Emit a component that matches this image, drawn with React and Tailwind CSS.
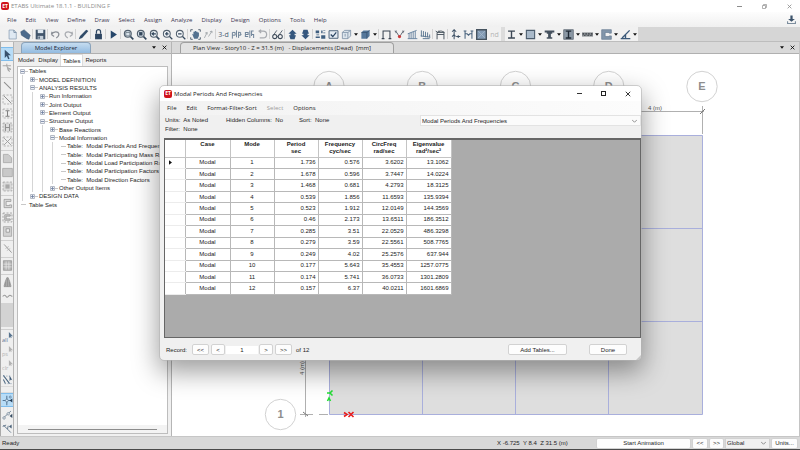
import React, { useState } from "react";

const ICONS = {
  file: <><path d="M3 1.5h7l3.5 3.5v9.5h-10.500z" fill="#dfe9f3" stroke="#8296ad" /><path d="M10 1.500v3.500h3.500" fill="none" stroke="#5c7590" /></>,
  open: <path d="M1 4l5-3 9 8-2 6-3-1-8-5z" fill="#4d6b8c" stroke="#344c66" strokeWidth=".6" />,
  save: <><path d="M1 1h14v14H1z" fill="#42566c" /><path d="M4 1h8v5H4z" fill="#dfe8f0" /><path d="M4 10h8v5H4z" fill="#c3ced9" /><path d="M5 11h2v3H5z" fill="#42566c" /></>,
  undo: <path d="M2 8l4 3M2 8l1-4M2 8c3-5 10-5 11-1 0 3-2 5-4 6" fill="none" stroke="#8a8f96" strokeWidth="1.7" />,
  redo: <path d="M14 8l-4 3M14 8l-1-4M14 8C11 3 4 3 3 7c0 3 2 5 4 6" fill="none" stroke="#a8abb0" strokeWidth="1.7" />,
  pencil: <path d="M1 15l2-5 9-9 3 2-9 10z" fill="#314c69" />,
  lock: <><path d="M3 7h10v8H3z" fill="#2f4763" /><path d="M5 7V4a3 3 0 016 0v3" fill="none" stroke="#2f4763" strokeWidth="1.8" /></>,
  play: <path d="M4 2l9 6-9 6z" fill="#27476b" />,
  zoomWindow: <><circle cx="7" cy="7" r="5" fill="#d8e2ea" stroke="#53616f" strokeWidth="1.7" /><path d="M4 5h6v5H4z" fill="none" stroke="#53616f" /><path d="M11 11l4 4" stroke="#33475c" strokeWidth="2.4" /></>,
  zoomFull: <><circle cx="7" cy="7" r="5" fill="#d8e2ea" stroke="#53616f" strokeWidth="1.7" /><path d="M4.500 4.500h5v5h-5z" fill="#33475c" /><path d="M11 11l4 4" stroke="#33475c" strokeWidth="2.400" /></>,
  zoomPrev: <><circle cx="7" cy="7" r="5" fill="#e6edf2" stroke="#53616f" strokeWidth="1.7" /><path d="M3 7l4-3v2h3v2H7v2z" fill="#33475c" /><path d="M11 11l4 4" stroke="#33475c" strokeWidth="2.4" /></>,
  zoomIn: <><circle cx="7" cy="7" r="5" fill="#f2f5f8" stroke="#53616f" strokeWidth="1.5" /><path d="M4.500 7h5M7 4.500v5M11 11l4 4" stroke="#33475c" strokeWidth="1.800" /></>,
  zoomOut: <><circle cx="7" cy="7" r="5" fill="#f2f5f8" stroke="#53616f" strokeWidth="1.5" /><path d="M4.500 7h5M11 11l4 4" stroke="#33475c" strokeWidth="1.800" /></>,
  pan: <><path d="M1 4V1h3M12 1h3v3M15 12v3h-3M4 15H1v-3" fill="none" stroke="#4a5a6b" strokeWidth="1.300" /><path d="M3 7l2 1V4h2V3h2v1h2v1h2v5l-2 4H6z" fill="#53718f" /></>,
  arrows: <path d="M2 13l4-8M3 6l3-1v3M8 11l5-8M10 4l3-1v3" fill="none" stroke="#a3a8ad" strokeWidth="1.3" />,
  plan: <path d="M2 14V5h4v4H2M8 2v10M11 4v9M11 9h3V5h-3M14 9l1-1" fill="none" stroke="#6d8298" strokeWidth="1.4" />,
  elev: <path d="M2 8h4V5H2v6h4M8.500 2v11M14 3h-3v5h3v5M11 8v2" fill="none" stroke="#71869c" strokeWidth="1.500" />,
  rotate: <path d="M4 3h5a5 5 0 010 10H4M6 1L3 3l3 3" fill="none" stroke="#a8abb0" strokeWidth="1.8" />,
  glasses: <><circle cx="4" cy="11" r="3" fill="none" stroke="#3f4c5b" strokeWidth="1.5" /><circle cx="12" cy="11" r="3" fill="none" stroke="#3f4c5b" strokeWidth="1.5" /><path d="M2 9l5-7M10 9l5-7M7 11h2" stroke="#3f4c5b" strokeWidth="1.200" /></>,
  up: <path d="M8 1l6 6h-3v2h2l-2 6H5L3 9h2V7H2z" fill="#35577e" />,
  down: <path d="M8 15l6-6h-3V7h2l-2-6H5L3 7h2v2H2z" fill="#35577e" />,
  objects: <path d="M1 2h5v4H1zM9 2h2v4H9zM12 2h3v1h-3zM12 5h3v1h-3zM2 8h4v1H2zM1 11h6v2H1zM9 9h6v5H9z" fill="#3f5f80" />,
  check: <><path d="M1.500 2.500h13v11h-13z" fill="#e4ebf2" stroke="#4d637b" strokeWidth="1.400" /><path d="M4 8l3 3 5-6" fill="none" stroke="#294462" strokeWidth="1.800" /></>,
  box: <path d="M2 5l3-3h9v8l-4 4H2zM2 5h8v9M10 5l4-3M6 7v4" fill="#dce5ed" stroke="#7d91a6" strokeWidth="1.200" />,
  solid: <><path d="M2 5l3-3h9v8l-4 4H2z" fill="#55789c" /><path d="M2 5h8v9M10 5l4-3" fill="none" stroke="#314b67" /></>,
  frame: <path d="M3 14V3h10v11M1 14h4M11 14h4" fill="none" stroke="#3b4654" strokeWidth="1.500" />,
  joint: <><path d="M1 3l3 2 3 5M15 3l-3 2-3 5M3 2v4M13 2v4" fill="none" stroke="#56616d" strokeWidth="1.3" /><circle cx="8" cy="11" r="2.300" fill="#cc3938" /></>,
  load: <path d="M1 14h14M3 14V6M6 14V5M9 14V4M12 14V3M1 7l13-5" fill="none" stroke="#63809d" strokeWidth="1.300" />,
  diagram: <path d="M1 10l14 2M2 2v9M5 3v8M8 4v8M11 5v7M14 8v4M4 14h10" fill="none" stroke="#54718e" strokeWidth="1.300" />,
  deform: <path d="M3 15V5h10v10M1 3l3 2 2-3M6 4c2-2 4-1 8 1M3 8h10" fill="none" stroke="#3f4b57" strokeWidth="1.300" />,
  node: <path d="M6 1v14M3 4l3-3 3 3M3 11l3-3 2 3M9 11h6M12 9v4" fill="none" stroke="#3f5266" strokeWidth="1.500" />,
  span: <path d="M3 14V3M13 14V3M1 3h4M11 3h4M3 7h3l2 2 2-2h3" fill="none" stroke="#48627d" strokeWidth="1.500" />,
  shell: <><path d="M1 1h14v14H1z" fill="#839bb5" stroke="#46535f" strokeWidth="2" /><path d="M3 3l10 10M13 3L3 13" stroke="#a9bdd1" /></>,
  ibeam: <path d="M3 2h10v2H9v8h4v2H3v-2h4V4H3z" fill="#3b4754" />,
  square: <path d="M2 2h12v12H2z" fill="#a9b9c9" stroke="#4c5d6e" strokeWidth="1.600" />,
  tee: <path d="M1 2h14v3h-3v2h-2v5h2v2H4v-2h2V7H4V5H1z" fill="#45515e" />,
  iboxed: <><path d="M1 1h14v14H1z" fill="#8b98a5" stroke="#4e5a66" /><path d="M4 2h8v2H9v8h3v2H4v-2h3V4H4z" fill="#202a35" /></>,
  deck: <><path d="M0 5h16v6H0z" fill="#84898e" /><path d="M1 6h2v2H1zM5 6h2v2H5zM9 6h2v2H9zM13 6h2v2h-2zM3 9h2v1H3zM8 9h2v1H8zM12 9h2v1h-2z" fill="#34393e" /></>,
  channel: <path d="M1 1h14v5h-3V5H6v6h6v-1h3v5H1z" fill="#8296ab" stroke="#647990" />,
  angle: <path d="M1 14h14M3 13L14 2M8 13V8" fill="none" stroke="#3b597a" strokeWidth="2" />,
  pointer: <path d="M4 1v12l3-3 2 5 2-1-2-5h4z" fill="#38516c" />,
  reshape: <path d="M1 4h12M7 1v3l2 6 2 3M9 7l4 2-4 2z" fill="none" stroke="#a3a3a3" strokeWidth="1.400" />,
  line: <path d="M3 3l10 10" stroke="#8f8f8f" strokeWidth="1.500" />,
  dashLine: <><path d="M1.500 1.500h13v13h-13z" fill="none" stroke="#9a9a9a" strokeDasharray="3 2" /><path d="M3 3l10 10" stroke="#8a8a8a" strokeWidth="1.400" /></>,
  dashBeam: <><path d="M1.500 1.500h13v13h-13z" fill="none" stroke="#9a9a9a" strokeDasharray="3 2" /><path d="M5 4h6M8 4v8M5 12h6" stroke="#808080" strokeWidth="1.500" /></>,
  dashCols: <><path d="M1.500 1.500h13v13h-13z" fill="#dedede" stroke="#9a9a9a" strokeDasharray="3 2" /><path d="M5 3v10M11 3v10M5 8h6" stroke="#909090" strokeWidth="1.500" /></>,
  brace: <><path d="M1.500 1.500h13v13h-13z" fill="none" stroke="#9a9a9a" strokeDasharray="3 2" /><path d="M3 3l10 10M13 3L3 13" stroke="#9a9a9a" strokeWidth="1.300" /></>,
  poly: <path d="M2 2h7l5 5v7H2z" fill="#cbcbcb" stroke="#a0a0a0" />,
  rect: <path d="M1 2h14v12H1z" fill="#c8c8c8" stroke="#9c9c9c" />,
  quick: <><path d="M1.500 1.500h13v13h-13z" fill="#d9d9d9" stroke="#9a9a9a" strokeDasharray="3 2" /><path d="M5 5h6v6H5z" fill="#a8a8a8" /></>,
  wall: <path d="M13 2H3v12h11v-4h-3v1H6V5h7z" fill="#d9d9d9" stroke="#8f8f8f" />,
  quickWall: <><path d="M1.500 1.500h13v13h-13z" fill="none" stroke="#888" strokeDasharray="3 2" /><path d="M12 4H4v8h8v-2H6V6h6z" fill="#d5d5d5" stroke="#888" /></>,
  opening: <><path d="M2 1h12v14H2z" fill="#d2d2d2" stroke="#999" /><path d="M6 4h5v5H6z" fill="#eee" stroke="#888" /></>,
  link: <><path d="M3 2l11 12" stroke="#999" strokeWidth="1.400" /><path d="M5 8l5-3M7 11l5-3" stroke="#aaa" /></>,
  grid: <><path d="M2 1h12v14H2z" fill="#b3b3b3" stroke="#929292" /><path d="M2 6h12M2 10h12M6 2v12M10 2v12" stroke="#eee" /></>,
  tower: <path d="M7 1h2l2 5 2 7v1H3v-1l2-7zM8 2v12M5 13V7M11 13V7" fill="#aaa" stroke="#8d8d8d" />,
  wave: <path d="M1 8c2-3 4-2 5 0s2 1 4-1 3 0 5 1" fill="none" stroke="#999" strokeWidth="1.500" />,
  selLine: <><path d="M2 2l9 12M2 8l3 6" stroke="#49657f" strokeWidth="1.500" /><path d="M2 3h10M4 14h11" stroke="#7f95aa" strokeDasharray="2 2" /><path d="M11 2v8l2-2 2 1z" fill="#3c5774" /></>,
  snapPt: <><path d="M1 8h12M7 1v14" stroke="#537493" strokeWidth="1.500" /><circle cx="7" cy="8" r="2" fill="#d5e9f8" stroke="#537493" /><path d="M15 5v6l-4-3z" fill="#233b54" /><circle cx="12" cy="3" r="1.500" fill="none" stroke="#537493" /></>,
  snapMid: <><path d="M2 13L13 3" stroke="#6b7f93" strokeWidth="1.300" /><circle cx="3" cy="13" r="1.800" fill="#eee" stroke="#6b7f93" /><circle cx="9" cy="7" r="1.800" fill="#eee" stroke="#6b7f93" /><path d="M15 7v6l-4-3z" fill="#364c62" /></>,
  snapInt: <><path d="M2 3l11 11M1 5l5-2M8 9l1-5" fill="none" stroke="#5a7087" strokeWidth="1.300" /><path d="M14 2v6l-4-3z" fill="#465e76" /></>,
};

const TEXT_ICONS = { threeD: ["3-d", "#4c6075"], nd: ["nd", "#b5b5b5"] };
const SEL_ICONS = { all: ["all", "#58748f"], ps: ["ps", "#b3b3b3"], clr: ["clr", "#b3b3b3"] };

// "|" separator, "v" drop-down arrow, ":" drag grip
const TOOLBAR = (
  "file open | save | undo redo | pencil | lock | play | zoomWindow zoomFull zoomPrev zoomIn zoomOut | pan arrows | " +
  "threeD plan elev rotate | glasses | up down | objects check box v solid v | frame joint load diagram | deform | " +
  "node span shell nd : ibeam v square v tee v iboxed v deck v channel v angle v"
).split(" ");

const SIDE_TOOLS = (
  "pointer reshape | line dashLine dashBeam dashCols brace | poly rect quick | wall quickWall opening | link | grid | " +
  "tower wave # | all ps clr selLine : snapPt snapMid snapInt"
).split(" ");

const MENUS = ["File", "Edit", "View", "Define", "Draw", "Select", "Assign", "Analyze", "Display", "Design", "Options", "Tools", "Help"];

// [depth, state, label]
const TREE = [
  [0, "-", "Tables"],
  [1, "+", "MODEL DEFINITION"],
  [1, "-", "ANALYSIS RESULTS"],
  [2, "+", "Run Information"],
  [2, "+", "Joint Output"],
  [2, "+", "Element Output"],
  [2, "-", "Structure Output"],
  [3, "+", "Base Reactions"],
  [3, "-", "Modal Information"],
  [4, "", "Table:  Modal Periods And Frequencies"],
  [4, "", "Table:  Modal Participating Mass Ratios"],
  [4, "", "Table:  Modal Load Participation Ratios"],
  [4, "", "Table:  Modal Participation Factors"],
  [4, "", "Table:  Modal Direction Factors"],
  [3, "+", "Other Output Items"],
  [1, "+", "DESIGN DATA"],
  [0, "", "Table Sets"],
];

const COLUMNS = [["Case", ""], ["Mode", ""], ["Period", "sec"], ["Frequency", "cyc/sec"], ["CircFreq", "rad/sec"], ["Eigenvalue", "rad²/sec²"]];

const ROWS = [
  ["1.736", "0.576", "3.6202", "13.1062"],
  ["1.678", "0.596", "3.7447", "14.0224"],
  ["1.468", "0.681", "4.2793", "18.3125"],
  ["0.539", "1.856", "11.6593", "135.9394"],
  ["0.523", "1.912", "12.0149", "144.3569"],
  ["0.46", "2.173", "13.6511", "186.3512"],
  ["0.285", "3.51", "22.0529", "486.3298"],
  ["0.279", "3.59", "22.5561", "508.7765"],
  ["0.249", "4.02", "25.2576", "637.944"],
  ["0.177", "5.643", "35.4553", "1257.0775"],
  ["0.174", "5.741", "36.0733", "1301.2809"],
  ["0.157", "6.37", "40.0211", "1601.6869"],
];

const Glyph = ({ name }) => (
  <svg viewBox="0 0 16 16" className="w-[11px] h-[11px] shrink-0">
    {ICONS[name]}
    {SEL_ICONS[name] && (
      <>
        <text x="0" y="15" fontSize="8" fill={SEL_ICONS[name][1]}>{SEL_ICONS[name][0]}</text>
        <path d="M10 0v9l2-2 1 2 1-1-1-2h3z" fill={SEL_ICONS[name][1]} />
      </>
    )}
  </svg>
);

const Logo = () => (
  <span className="flex items-center justify-center w-2 h-2 rounded-xs bg-[#d0131b] text-white text-[5px] leading-none font-bold shrink-0">ET</span>
);

const Caret = () => (
  <svg viewBox="0 0 6 4" className="w-1 h-[3px]"><path d="M0 0h6L3 4z" fill="#111" /></svg>
);

const Cross = ({ className }) => (
  <svg viewBox="0 0 8 8" className={className}><path d="M1 1l6 6M7 1L1 7" stroke="currentColor" strokeWidth="1.300" /></svg>
);

const Chevron = () => (
  <svg viewBox="0 0 8 8" className="absolute right-1 top-1/2 -translate-y-1/2 w-[5px] h-[5px] pointer-events-none">
    <path d="M0 2l4 4 4-4" fill="none" stroke="#555" />
  </svg>
);

const PaneControls = () => (
  <div className="ml-auto flex items-center gap-1.5 pr-1">
    <button aria-label="Pane menu"><Caret /></button>
    <button aria-label="Close pane"><Cross className="w-[5px] h-[5px] text-black" /></button>
  </div>
);

const Toolbar = () => (
  <div className="flex bg-[#d6d6d6] border-b border-[#bdbdbd]">
    <div className="flex h-[14px] pl-1.5 bg-[#f1f1f1]">
      {TOOLBAR.map((name, i) => {
        if (name === "|") return <span key={i} className="w-0.5 my-0.5 border-l border-[#d2d2d2]" />;
        if (name === ":") return <span key={i} className="w-1 bg-[#dcdcdc]" />;
        if (name === "v") {
          return <button key={i} aria-label="More" className="w-1.5 flex items-center justify-center"><Caret /></button>;
        }
        const text = TEXT_ICONS[name];
        return (
          <button key={i} aria-label={name} className="w-[13px] flex items-center justify-center text-[7px] leading-none">
            {text ? <span style={{ color: text[1] }}>{text[0]}</span> : <Glyph name={name} />}
          </button>
        );
      })}
    </div>
  </div>
);

const SideTools = () => (
  <div className="w-[13px] shrink-0 flex flex-col overflow-hidden pt-[5px] bg-[#efefef] border-l border-[#a9a9a9]">
    {SIDE_TOOLS.map((name, i) => {
      if (name === "|") return <span key={i} className="h-[3px] shrink-0 border-b border-[#d0d0d0]" />;
      if (name === ":") return <span key={i} className="h-[7px] shrink-0 border-y border-[#dcdcdc]" />;
      if (name === "#") return <span key={i} className="h-6 shrink-0 bg-[#d3d3d3]" />;
      const active = name === "pointer" || name === "snapPt";
      return (
        <button
          key={i}
          aria-label={name}
          className={`h-[14px] shrink-0 flex items-center justify-center ${active ? "bg-[#b7dcf7] border-y border-[#7fbdec]" : ""}`}
        >
          <Glyph name={name} />
        </button>
      );
    })}
  </div>
);

const TreeRow = ({ depth, state, label }) => (
  <li className="flex items-center whitespace-pre">
    {Array.from({ length: depth }).map((_, i) => (
      <span key={i} className="w-2.5 shrink-0 self-stretch flex pl-[3px]">
        <span className="border-l border-[#d5d5d5]" />
      </span>
    ))}
    <span className={`shrink-0 flex items-center pl-px ${depth === 4 ? "w-2" : "w-2.5"}`}>
      {state ? (
        <svg viewBox="0 0 9 5" className="w-[9px] h-[5px]">
          <path d="M.5 .5h4v4h-4z" fill="#eef1f6" stroke="#b4bac6" />
          <path d={state === "+" ? "M1 2.500h3M2.500 1v3" : "M1 2.500h3"} stroke="#6e7f9f" strokeWidth=".8" />
          <path d="M5 2.500h3" stroke="#c8c8c8" />
        </svg>
      ) : (
        <span className="w-[5px] ml-px border-t border-[#c8c8c8]" />
      )}
    </span>
    <span>{label}</span>
  </li>
);

const Explorer = () => {
  const [tab, setTab] = useState("Tables");
  return (
    <aside className="w-[159px] shrink-0 flex flex-col bg-[#f0f0f0] border-x border-[#b5b5b5] font-['Liberation_Sans',sans-serif]">
      <div className="h-3 flex items-end bg-[#d9d9d9] border-b border-[#b0b0b0]">
        <h2 className="ml-[7px] w-[70px] h-[11px] flex items-center justify-center rounded-t-sm border border-b-0 border-[#8aa3bb] bg-linear-to-b from-[#c5dcf0] to-[#93bbe0] font-['Open_Sans',sans-serif] text-[#1c2734]">
          Model Explorer
        </h2>
        <div className="ml-auto self-stretch flex"><PaneControls /></div>
      </div>
      <div className="flex h-3 pl-0.5">
        {["Model", "Display", "Tables", "Reports"].map((t) => (
          <button
            key={t}
            onClick={() => setTab(t)}
            className={`px-0.5 flex items-center ${tab === t ? "bg-white border-x border-t border-[#dcdcdc]" : ""}`}
          >
            {t}
          </button>
        ))}
      </div>
      <div className="flex-1 min-h-0 mx-[3px] mb-0.5 flex flex-col overflow-hidden bg-white border border-[#bdbdbd]">
        <ul className="h-[142px] shrink-0 grid auto-rows-fr pl-px">
          {TREE.map(([depth, state, label]) => (
            <TreeRow key={label} depth={depth} state={state} label={label} />
          ))}
        </ul>
        <div className="mt-auto h-2 flex items-center px-2.5 bg-[#f3f3f3]">
          <span className="w-full h-px bg-[#8c8c8c]" />
        </div>
      </div>
    </aside>
  );
};

const Drawing = () => (
  <svg width="628" height="382" className="block font-['Liberation_Sans',sans-serif]">
    <path d="M157.500 81.500h373v279h-373z" fill="#dedede" stroke="#a9afdc" />
    <path d="M250.500 81v280M343.500 81v280M436.500 81v280M157 174.500h373M157 267.500h373" stroke="#a9afdc" />
    {["A", "B", "C", "D", "E"].map((name, i) => (
      <g key={name}>
        <circle cx={157 + i * 93.250} cy="32.500" r="15.200" fill="#fff" stroke="#d2d2d2" />
        <text x={157 + i * 93.250} y="36" textAnchor="middle" fontSize="11" fontWeight="bold" fill="#8e8e8e">{name}</text>
      </g>
    ))}
    <circle cx="108.500" cy="360.500" r="15.200" fill="#fff" stroke="#d2d2d2" />
    <text x="108.500" y="364" textAnchor="middle" fontSize="11" fontWeight="bold" fill="#8e8e8e">1</text>
    <path d="M157 57.500h375M133.500 57v306M530.500 52v28M128 360.500h13M147 360.500h9" stroke="#b0b0b0" />
    <path d="M528 60l5-5M131 358l5 4" stroke="#777" />
    <text x="476" y="56" fontSize="6" fill="#555">4 (m)</text>
    <text transform="translate(132 321) rotate(-90)" fontSize="6" fill="#555">4 (m)</text>
    <path d="M172 358.500l3 2-3 2M176.500 358l5 5M181.500 358l-5 5" fill="none" stroke="#e81c1c" strokeWidth="1.600" />
    <path d="M155.500 347l1.500-3 1.500 3M160.500 336.500l-2.500 2.500h-3M158 339l2.500 2.500" fill="none" stroke="#22dd33" strokeWidth="1.600" />
  </svg>
);

const PlanView = () => (
  <main className="flex-1 min-w-0 flex flex-col bg-white border-r border-[#c4c4c4]">
    <div className="h-3 flex items-end bg-[#d9d9d9] border-b border-[#b0b0b0]">
      <h2 className="ml-2 w-[214px] h-[11px] pl-3 flex items-center whitespace-pre rounded-t-sm border border-b-0 border-[#a0a0a0] bg-[#e2e2e2] text-[#222]">
        Plan View - Story10 - Z = 31.5 (m)   - Displacements (Dead)  [mm]
      </h2>
      <div className="ml-auto self-stretch flex"><PaneControls /></div>
    </div>
    <div className="flex-1 min-h-0 overflow-hidden"><Drawing /></div>
  </main>
);

const NavButton = ({ label, children, className }) => (
  <button aria-label={label} className={`h-[11px] flex items-center justify-center rounded-xs border border-[#d2d2d2] bg-[#fdfdfd] ${className}`}>
    {children}
  </button>
);

const ResultsDialog = () => {
  const [record, setRecord] = useState("1");
  return (
    <section
      role="dialog"
      aria-label="Modal Periods And Frequencies"
      className="absolute left-[160px] top-[86px] w-[481px] flex flex-col rounded-[4px] overflow-hidden bg-[#f0f0f0] outline outline-[#b4b4b4]/60 shadow-[0_10px_26px_2px_rgba(0,0,0,0.38)] font-['Liberation_Sans',sans-serif]"
    >
      <header className="h-[15px] flex items-center gap-0.5 pl-1 bg-white font-['Open_Sans',sans-serif]">
        <Logo />
        <h3 className="text-[#222]">Modal Periods And Frequencies</h3>
        <div className="ml-auto flex items-center gap-[19px] pr-2.5 text-[#333]">
          <button aria-label="Minimize" className="w-[5px] h-px bg-[#333]" />
          <button aria-label="Maximize" className="w-[5px] h-[5px] border border-[#222]" />
          <button aria-label="Close"><Cross className="w-1.5 h-1.5" /></button>
        </div>
      </header>
      <nav className="h-[14px] flex items-center gap-2.5 pl-[7px] bg-linear-to-r from-[#f2f2f2] to-[#fcfcfc] font-['Open_Sans',sans-serif] text-[#222]">
        <button>File</button>
        <button>Edit</button>
        <button>Format-Filter-Sort</button>
        <button disabled className="text-[#9b9b9b]">Select</button>
        <button>Options</button>
      </nav>
      <div className="h-[22px] flex items-start">
        <div className="w-[260px] pl-[5px] pt-px">
          <div className="flex leading-[9px] whitespace-pre">
            <span className="w-[61px]">Units:  As Noted</span>
            <span className="w-[73px]">Hidden Columns:  No</span>
            <span>Sort:  None</span>
          </div>
          <div className="leading-[9px] whitespace-pre">Filter:  None</div>
        </div>
        <div className="relative flex-1">
          <select aria-label="Table" className="w-full h-[11px] appearance-none pl-px bg-[#fbfbfb] border border-[#e3e3e3]">
            <option>Modal Periods And Frequencies</option>
          </select>
          <Chevron />
        </div>
      </div>
      <div className="h-[200px] mt-px ml-1 bg-[#ababab] border border-t-2 border-[#666]">
        <table className="h-[155px] w-[286px] table-fixed border-collapse bg-white text-[#222]">
          <colgroup>
            <col className="w-5" />
            <col className="w-[45px]" />
            <col className="w-11" />
            <col className="w-11" />
            <col className="w-11" />
            <col className="w-11" />
            <col className="w-[45px]" />
          </colgroup>
          <thead>
            <tr className="h-[17px] align-top leading-[7px]">
              <th className="border-r border-b border-[#c4c4c4]" />
              {COLUMNS.map(([name, unit]) => (
                <th key={name} className="border-r border-b border-[#c4c4c4] pt-px font-bold">
                  {name}<br />{unit}
                </th>
              ))}
            </tr>
          </thead>
          <tbody className="leading-[7px]">
            {ROWS.map((row, i) => (
              <tr key={i}>
                <td className="border-b border-[#ececec] border-r border-r-[#b8b8b8] pl-1">
                  {i === 0 && <svg viewBox="0 0 4 6" className="w-[3px] h-[5px]"><path d="M0 0l4 3-4 3z" fill="#111" /></svg>}
                </td>
                <td className="border border-[#b8b8b8] text-center">Modal</td>
                <td className="border border-[#b8b8b8] text-center">{i + 1}</td>
                {row.map((v) => (
                  <td key={v} className="border border-[#b8b8b8] text-right pr-0.5">{v}</td>
                ))}
              </tr>
            ))}
          </tbody>
        </table>
      </div>
      <footer className="relative h-[22px] flex items-center pl-1.5 pr-[14px] pt-px">
        <label htmlFor="record" className="w-[26px]">Record:</label>
        <NavButton label="First" className="w-[17px] mr-0.5">&lt;&lt;</NavButton>
        <NavButton label="Previous" className="w-[14px]">&lt;</NavButton>
        <input
          id="record"
          value={record}
          onChange={(e) => setRecord(e.target.value)}
          className="w-8 h-2 mx-px bg-white text-center"
        />
        <NavButton label="Next" className="w-[14px] mr-0.5">&gt;</NavButton>
        <NavButton label="Last" className="w-[17px] mr-1">&gt;&gt;</NavButton>
        <span>of 12</span>
        <NavButton className="ml-auto w-[59px] mr-[22px]">Add Tables...</NavButton>
        <NavButton className="w-[38px]">Done</NavButton>
        <svg viewBox="0 0 5 5" className="absolute right-0 bottom-0 w-[5px] h-[5px]"><path d="M0 5l5-5v5z" fill="#c6c6c6" /></svg>
      </footer>
    </section>
  );
};

const StatusBar = () => (
  <footer className="h-[14px] shrink-0 flex items-center pl-0.5 pr-0.5 bg-[#d8d8d8] border-t border-t-[#c6c6c6] border-b border-b-[#4a4a4a] font-['Liberation_Sans',sans-serif]">
    <span>Ready</span>
    <span className="ml-auto w-[99px] whitespace-pre">X -6.725  Y 8.4  Z 31.5 (m)</span>
    <NavButton className="w-[95px] mr-px">Start Animation</NavButton>
    <NavButton label="Step back" className="w-4 mr-px">&lt;&lt;</NavButton>
    <NavButton label="Step forward" className="w-[15px] mr-px">&gt;&gt;</NavButton>
    <div className="relative w-[45px] mr-px">
      <select aria-label="Coordinate system" className="block w-full h-[11px] appearance-none pl-px bg-[#f0f0f0] border border-[#d2d2d2]">
        <option>Global</option>
      </select>
      <Chevron />
    </div>
    <NavButton className="w-[27px]">Units...</NavButton>
  </footer>
);

export default function App() {
  return (
    <div className="relative h-screen flex flex-col overflow-hidden bg-white text-[6px] leading-[8px] text-[#1e1e1e] font-['Open_Sans',sans-serif]">
      <header className="h-3 shrink-0 flex items-center gap-0.5 pl-px text-[#8c8c8c]">
        <Logo />
        <h1>ETABS Ultimate 18.1.1 - BUILDING F</h1>
        <div className="ml-auto flex items-center gap-5 pr-2">
          <button aria-label="Minimize" className="w-[5px] h-px bg-[#8c8c8c]" />
          <button aria-label="Restore">
            <svg viewBox="0 0 10 10" className="w-[5px] h-[5px]"><path d="M1 3h6v6H1zM3 3V1h6v6H7" fill="none" stroke="#888" strokeWidth="1.300" /></svg>
          </button>
          <button aria-label="Close"><Cross className="w-[5px] h-[5px]" /></button>
        </div>
      </header>
      <nav className="h-[15px] shrink-0 flex items-center gap-[9px] pl-[7px] pr-1 bg-linear-to-b from-[#fdfdfd] to-[#f0f0f0] text-[#3b3550]">
        {MENUS.map((m) => <button key={m}>{m}</button>)}
        <button aria-label="Download" className="ml-auto">
          <svg viewBox="0 0 16 16" className="w-[9px] h-[9px]"><path d="M6 1h4v6h4l-6 5-6-5h4z" fill="#3c536b" /><path d="M1 11v4h14v-4" fill="none" stroke="#7d8e9e" strokeWidth="2" /></svg>
        </button>
      </nav>
      <Toolbar />
      <div className="flex-1 min-h-0 flex">
        <SideTools />
        <Explorer />
        <PlanView />
      </div>
      <StatusBar />
      <ResultsDialog />
    </div>
  );
}
